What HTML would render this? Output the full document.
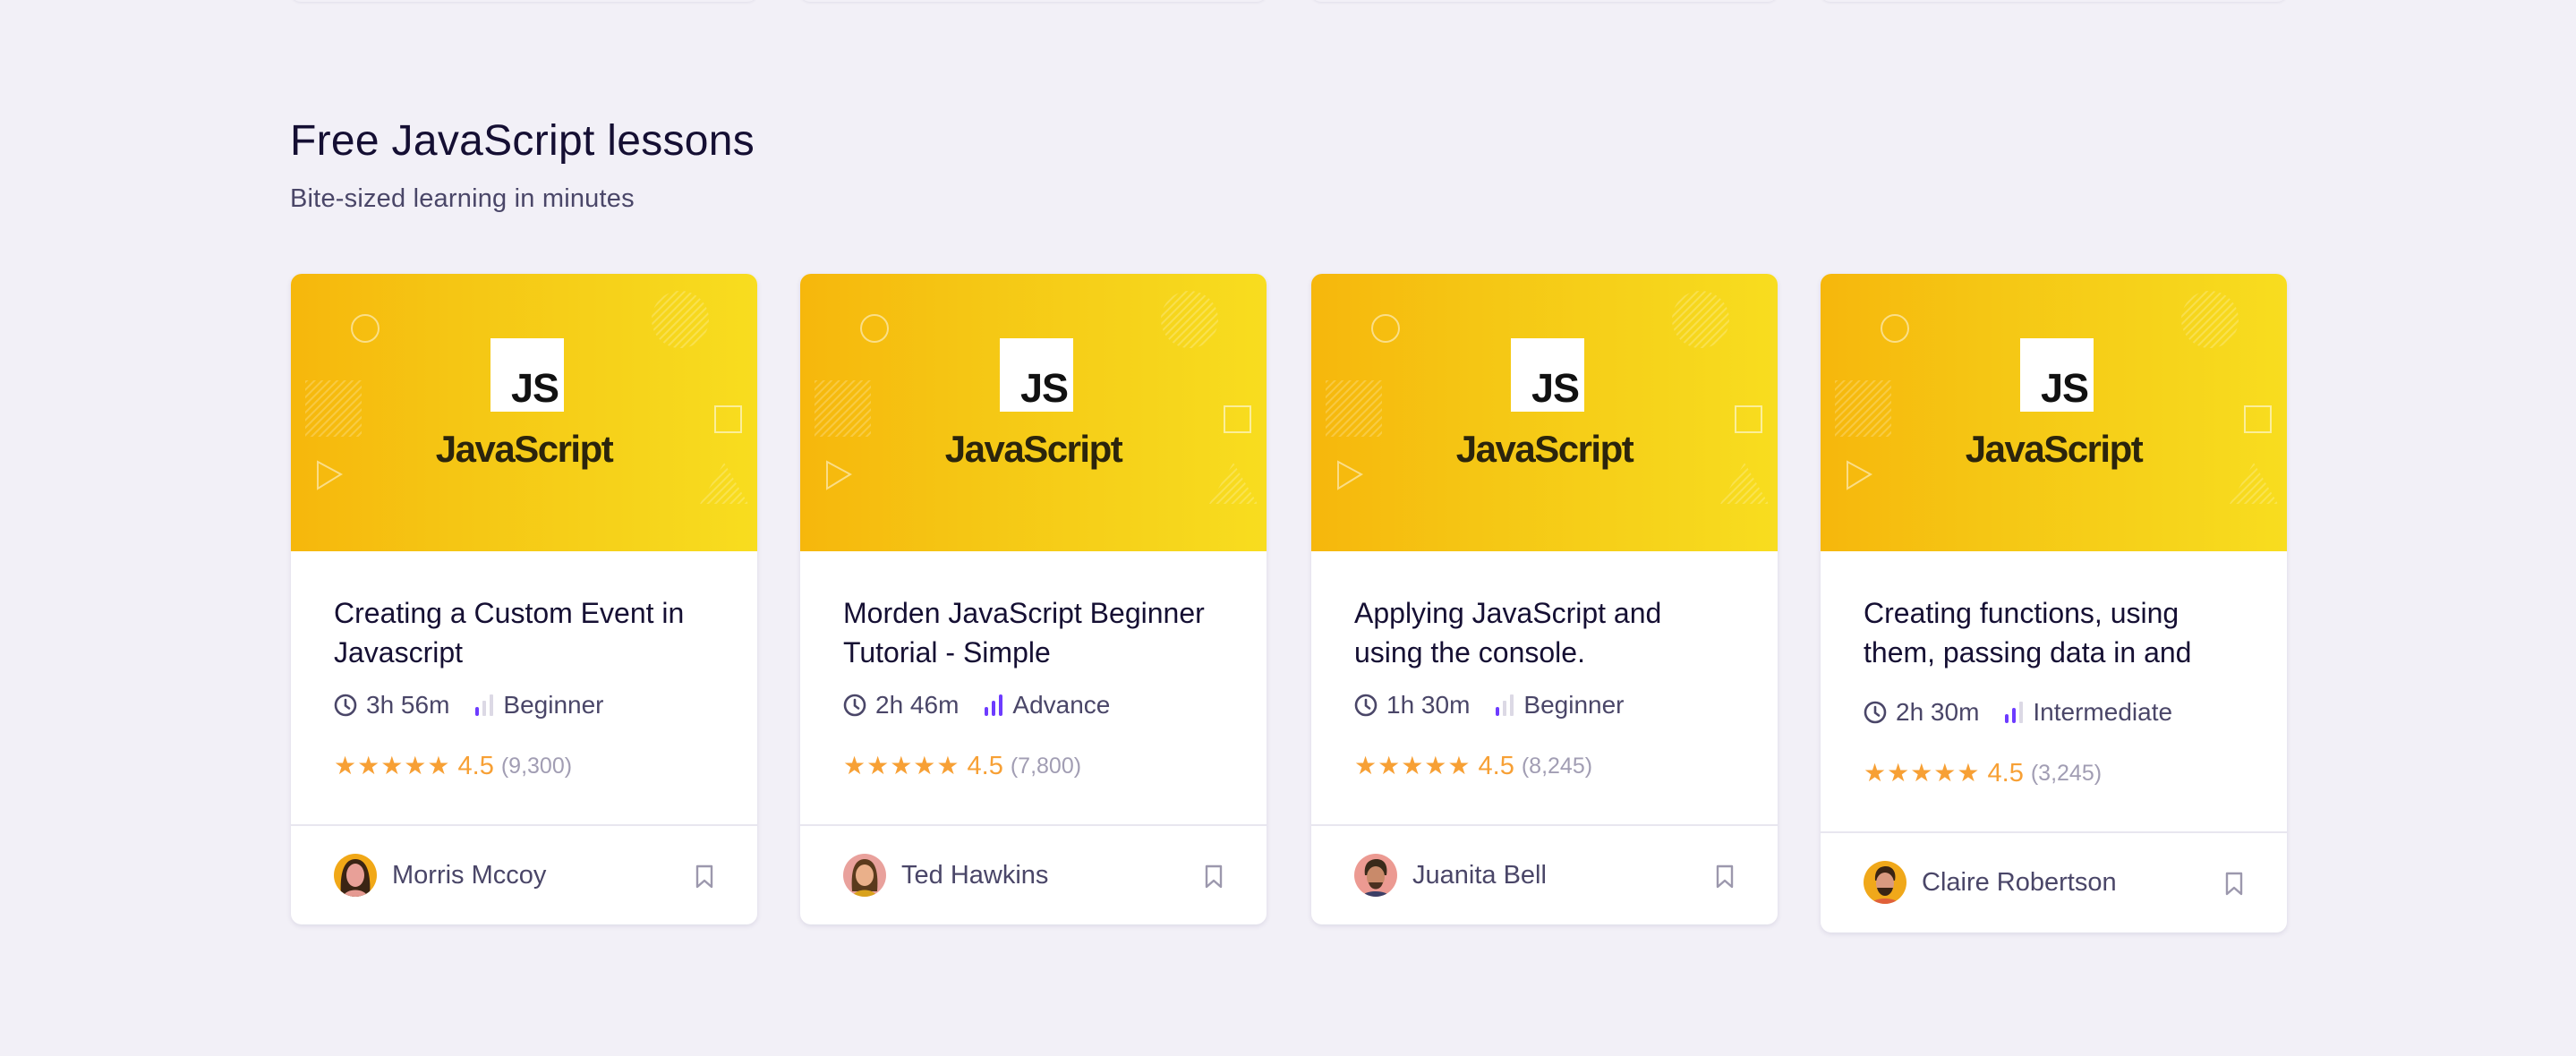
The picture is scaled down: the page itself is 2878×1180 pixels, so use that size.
<!DOCTYPE html>
<html><head><meta charset="utf-8"><style>
*{margin:0;padding:0;box-sizing:border-box}
body{width:2878px;height:1180px;background:#f2f0f7;font-family:"Liberation Sans",Arial,sans-serif;position:relative;overflow:hidden}
.topc{position:absolute;top:-20px;height:22px;width:521px;border-radius:12px;background:#f2f0f7;box-shadow:0 1px 3px rgba(30,20,80,.08)}
h1{position:absolute;left:324px;top:128px;font-size:48px;font-weight:400;color:#150f33;letter-spacing:.3px;line-height:60px}
.sub{position:absolute;left:324px;top:202px;font-size:29px;color:#4a4668;line-height:40px;letter-spacing:.2px}
.card{position:absolute;top:306px;width:521px;height:727px;background:#fff;border-radius:12px;box-shadow:0 2px 6px rgba(40,30,90,.10);overflow:hidden}
.img{position:absolute;left:0;top:0;width:521px;height:310px;background:linear-gradient(90deg,#f6b70c 0%,#f5c614 35%,#f6d41b 75%,#f8dd1f 100%)}
.img svg{position:absolute;left:0;top:0}
.jsbox{position:absolute;left:223px;top:72px;width:82px;height:82px;background:#fff}
.jsbox span{position:absolute;right:6px;bottom:4px;font-weight:700;font-size:45px;letter-spacing:-1px;color:#111;line-height:45px}
.jsname{position:absolute;left:0;width:521px;top:171px;text-align:center;font-weight:700;font-size:42px;letter-spacing:-1.5px;color:#2b240c;line-height:50px}
.body{position:absolute;left:48px;top:357px;right:44px}
.t{font-size:32px;line-height:44px;color:#150f33;height:88px;width:412px}
.meta{margin-top:17px;font-size:28px;line-height:40px;color:#4a4668;display:flex;align-items:center}
.meta svg{margin-right:10px}
.lvl{margin-left:28px;display:flex;align-items:center}
.rate{margin-top:28px;font-size:29px;line-height:40px;display:flex;align-items:center;color:#f7a035}
.rate .s{font-size:28px;letter-spacing:1px;margin-right:8px}
.rate .c{font-size:25px;color:#a19db3;margin-left:8px}
.div{position:absolute;left:0;right:0;top:615px;height:2px;background:#e8e6ef}
.foot{position:absolute;left:48px;top:648px;display:flex;align-items:center;font-size:29px;color:#4a4668}
.foot svg{margin-right:17px}
.bm{position:absolute;right:48px;top:660px}
.c4 .meta{margin-top:25px}
.c4 .div{top:623px}
.c4 .foot{top:656px}
.c4 .bm{top:668px}
.c4{height:736px}
</style></head><body>
<div class="topc" style="left:325px"></div><div class="topc" style="left:894px"></div><div class="topc" style="left:1465px"></div><div class="topc" style="left:2034px"></div>
<h1>Free JavaScript lessons</h1>
<div class="sub">Bite-sized learning in minutes</div>

<div class="card" style="left:325px">
<div class="img"><svg width="521" height="310"><defs><pattern id="h" width="6" height="6" patternUnits="userSpaceOnUse" patternTransform="rotate(45)"><rect width="2" height="6" fill="rgba(255,255,255,.22)"/></pattern></defs>
<circle cx="83" cy="61" r="15" fill="none" stroke="rgba(255,255,255,.5)" stroke-width="2"/>
<rect x="16" y="119" width="63" height="63" fill="url(#h)"/>
<path d="M30 210 L56 224 L30 240Z" fill="none" stroke="rgba(255,255,255,.5)" stroke-width="2"/>
<circle cx="435" cy="51" r="32" fill="url(#h)"/>
<rect x="474" y="148" width="29" height="29" fill="none" stroke="rgba(255,255,255,.55)" stroke-width="2"/>
<path d="M484 211 L511 257 L457 257Z" fill="url(#h)"/></svg>
<div class="jsbox"><span>JS</span></div><div class="jsname">JavaScript</div></div>
<div class="body"><div class="t">Creating a Custom Event in Javascript</div>
<div class="meta"><svg width="26" height="26" viewBox="0 0 26 26"><circle cx="13" cy="13" r="11" fill="none" stroke="#4a4668" stroke-width="2.6"/><path d="M13 7v6.5l4 3" fill="none" stroke="#4a4668" stroke-width="2.6" stroke-linecap="round"/></svg>3h 56m<span class="lvl"><svg width="22" height="24"><rect x="1" y="14" width="4" height="10" rx="2" fill="#6d3bff"/><rect x="9" y="7" width="4" height="17" rx="1" fill="#dcd9e5"/><rect x="17" y="0" width="4" height="24" rx="1" fill="#dcd9e5"/></svg>Beginner</span></div>
<div class="rate"><span class="s">★★★★★</span>4.5<span class="c">(9,300)</span></div></div>
<div class="div"></div>
<div class="foot"><svg width="48" height="48" viewBox="0 0 48 48"><clipPath id="a1"><circle cx="24" cy="24" r="24"/></clipPath><g clip-path="url(#a1)"><rect width="48" height="48" fill="#f1a817"/><path d="M8 48 C6 20 12 6 24 6 C36 6 42 20 40 48Z" fill="#3a2414"/><ellipse cx="24" cy="24" rx="10" ry="13" fill="#e8a098"/><path d="M10 48 C14 38 34 38 38 48Z" fill="#e59a92"/></g></svg>Morris Mccoy</div>
<svg class="bm" width="22" height="28" viewBox="0 0 22 28"><path d="M3 2h16v23l-8-7-8 7z" fill="none" stroke="#9c98ad" stroke-width="2.4" stroke-linejoin="round"/></svg>
</div>

<div class="card" style="left:894px">
<div class="img"><svg width="521" height="310"><circle cx="83" cy="61" r="15" fill="none" stroke="rgba(255,255,255,.5)" stroke-width="2"/><rect x="16" y="119" width="63" height="63" fill="url(#h)"/><path d="M30 210 L56 224 L30 240Z" fill="none" stroke="rgba(255,255,255,.5)" stroke-width="2"/><circle cx="435" cy="51" r="32" fill="url(#h)"/><rect x="474" y="148" width="29" height="29" fill="none" stroke="rgba(255,255,255,.55)" stroke-width="2"/><path d="M484 211 L511 257 L457 257Z" fill="url(#h)"/></svg>
<div class="jsbox"><span>JS</span></div><div class="jsname">JavaScript</div></div>
<div class="body"><div class="t">Morden JavaScript Beginner Tutorial - Simple</div>
<div class="meta"><svg width="26" height="26" viewBox="0 0 26 26"><circle cx="13" cy="13" r="11" fill="none" stroke="#4a4668" stroke-width="2.6"/><path d="M13 7v6.5l4 3" fill="none" stroke="#4a4668" stroke-width="2.6" stroke-linecap="round"/></svg>2h 46m<span class="lvl"><svg width="22" height="24"><rect x="1" y="14" width="4" height="10" rx="2" fill="#6d3bff"/><rect x="9" y="7" width="4" height="17" rx="2" fill="#6d3bff"/><rect x="17" y="0" width="4" height="24" rx="2" fill="#6d3bff"/></svg>Advance</span></div>
<div class="rate"><span class="s">★★★★★</span>4.5<span class="c">(7,800)</span></div></div>
<div class="div"></div>
<div class="foot"><svg width="48" height="48" viewBox="0 0 48 48"><clipPath id="a2"><circle cx="24" cy="24" r="24"/></clipPath><g clip-path="url(#a2)"><rect width="48" height="48" fill="#e9a19c"/><path d="M10 42 C8 16 14 6 24 6 C34 6 40 16 38 42Z" fill="#5a3a1c"/><ellipse cx="24" cy="24" rx="10" ry="12" fill="#eab08a"/><path d="M10 48 C14 38 34 38 38 48Z" fill="#d9a21c"/></g></svg>Ted Hawkins</div>
<svg class="bm" width="22" height="28" viewBox="0 0 22 28"><path d="M3 2h16v23l-8-7-8 7z" fill="none" stroke="#9c98ad" stroke-width="2.4" stroke-linejoin="round"/></svg>
</div>

<div class="card" style="left:1465px">
<div class="img"><svg width="521" height="310"><circle cx="83" cy="61" r="15" fill="none" stroke="rgba(255,255,255,.5)" stroke-width="2"/><rect x="16" y="119" width="63" height="63" fill="url(#h)"/><path d="M30 210 L56 224 L30 240Z" fill="none" stroke="rgba(255,255,255,.5)" stroke-width="2"/><circle cx="435" cy="51" r="32" fill="url(#h)"/><rect x="474" y="148" width="29" height="29" fill="none" stroke="rgba(255,255,255,.55)" stroke-width="2"/><path d="M484 211 L511 257 L457 257Z" fill="url(#h)"/></svg>
<div class="jsbox"><span>JS</span></div><div class="jsname">JavaScript</div></div>
<div class="body"><div class="t">Applying JavaScript and<br>using the console.</div>
<div class="meta"><svg width="26" height="26" viewBox="0 0 26 26"><circle cx="13" cy="13" r="11" fill="none" stroke="#4a4668" stroke-width="2.6"/><path d="M13 7v6.5l4 3" fill="none" stroke="#4a4668" stroke-width="2.6" stroke-linecap="round"/></svg>1h 30m<span class="lvl"><svg width="22" height="24"><rect x="1" y="14" width="4" height="10" rx="2" fill="#6d3bff"/><rect x="9" y="7" width="4" height="17" rx="1" fill="#dcd9e5"/><rect x="17" y="0" width="4" height="24" rx="1" fill="#dcd9e5"/></svg>Beginner</span></div>
<div class="rate"><span class="s">★★★★★</span>4.5<span class="c">(8,245)</span></div></div>
<div class="div"></div>
<div class="foot"><svg width="48" height="48" viewBox="0 0 48 48"><clipPath id="a3"><circle cx="24" cy="24" r="24"/></clipPath><g clip-path="url(#a3)"><rect width="48" height="48" fill="#ec9a92"/><path d="M12 24 C10 10 18 6 25 6 C33 6 38 12 36 24Z" fill="#3a2a1a"/><ellipse cx="24" cy="26" rx="10" ry="12" fill="#c98a6a"/><path d="M16 32 C18 42 30 42 32 32Z" fill="#4a3020"/><path d="M8 48 C12 40 36 40 40 48Z" fill="#3c3f66"/></g></svg>Juanita Bell</div>
<svg class="bm" width="22" height="28" viewBox="0 0 22 28"><path d="M3 2h16v23l-8-7-8 7z" fill="none" stroke="#9c98ad" stroke-width="2.4" stroke-linejoin="round"/></svg>
</div>

<div class="card c4" style="left:2034px">
<div class="img"><svg width="521" height="310"><circle cx="83" cy="61" r="15" fill="none" stroke="rgba(255,255,255,.5)" stroke-width="2"/><rect x="16" y="119" width="63" height="63" fill="url(#h)"/><path d="M30 210 L56 224 L30 240Z" fill="none" stroke="rgba(255,255,255,.5)" stroke-width="2"/><circle cx="435" cy="51" r="32" fill="url(#h)"/><rect x="474" y="148" width="29" height="29" fill="none" stroke="rgba(255,255,255,.55)" stroke-width="2"/><path d="M484 211 L511 257 L457 257Z" fill="url(#h)"/></svg>
<div class="jsbox"><span>JS</span></div><div class="jsname">JavaScript</div></div>
<div class="body"><div class="t" style="overflow:hidden">Creating functions, using<br>them, passing data in and</div>
<div class="meta"><svg width="26" height="26" viewBox="0 0 26 26"><circle cx="13" cy="13" r="11" fill="none" stroke="#4a4668" stroke-width="2.6"/><path d="M13 7v6.5l4 3" fill="none" stroke="#4a4668" stroke-width="2.6" stroke-linecap="round"/></svg>2h 30m<span class="lvl"><svg width="22" height="24"><rect x="1" y="14" width="4" height="10" rx="2" fill="#6d3bff"/><rect x="9" y="7" width="4" height="17" rx="2" fill="#6d3bff"/><rect x="17" y="0" width="4" height="24" rx="1" fill="#dcd9e5"/></svg>Intermediate</span></div>
<div class="rate"><span class="s">★★★★★</span>4.5<span class="c">(3,245)</span></div></div>
<div class="div"></div>
<div class="foot"><svg width="48" height="48" viewBox="0 0 48 48"><clipPath id="a4"><circle cx="24" cy="24" r="24"/></clipPath><g clip-path="url(#a4)"><rect width="48" height="48" fill="#f0a81a"/><path d="M13 22 C12 10 18 6 25 6 C32 6 37 12 35 22Z" fill="#3a2414"/><ellipse cx="24" cy="25" rx="10" ry="12" fill="#d99a80"/><path d="M15 30 C18 42 30 42 33 30Z" fill="#3a2414"/><path d="M8 48 C12 40 36 40 40 48Z" fill="#e0603a"/></g></svg>Claire Robertson</div>
<svg class="bm" width="22" height="28" viewBox="0 0 22 28"><path d="M3 2h16v23l-8-7-8 7z" fill="none" stroke="#9c98ad" stroke-width="2.4" stroke-linejoin="round"/></svg>
</div>
</body></html>
